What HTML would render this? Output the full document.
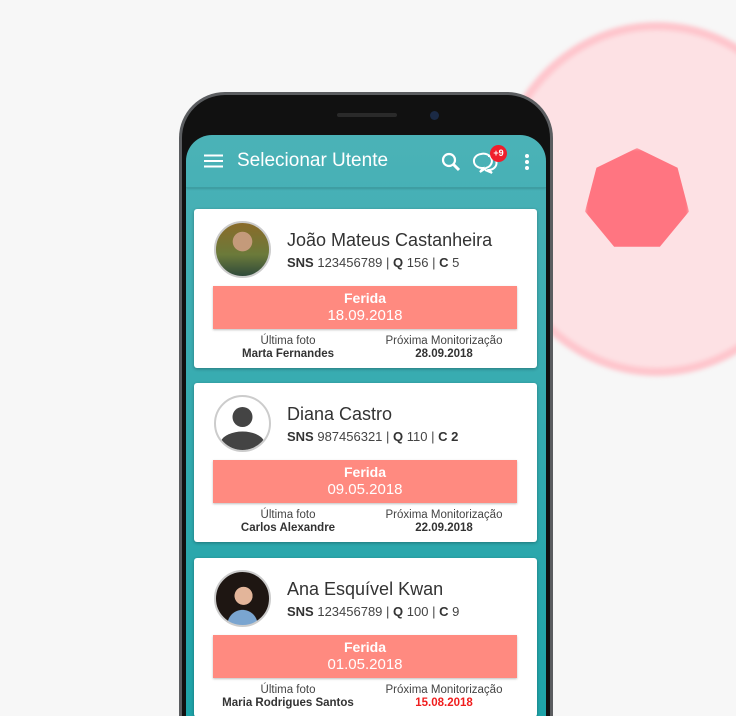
<!DOCTYPE html>
<html><head><meta charset="utf-8"><style>
*{margin:0;padding:0;box-sizing:border-box}
html,body{width:736px;height:716px;overflow:hidden}
body{background:#f7f7f7;font-family:"Liberation Sans",sans-serif;position:relative}
.logo{position:absolute;left:492px;top:22px;width:330px;height:354px;border-radius:50%;background:rgba(255,215,220,.7);border:8px solid rgba(255,175,185,.55);filter:blur(2px)}
.hep{position:absolute;left:585px;top:148px;width:104px;height:104px;background:#ff7581;clip-path:polygon(50% 0,89% 19%,100% 61%,72% 95%,28% 95%,0 61%,11% 19%);filter:blur(1.5px)}
.phone{position:absolute;left:179px;top:92px;width:374px;height:624px;border-radius:46px 46px 0 0;background:#111;border:3px solid #5b5d60;border-bottom:none}
.screen{position:absolute;left:186px;top:135px;width:360px;height:581px;border-radius:26px 26px 0 0;background:linear-gradient(#4bb2b7,#1ea3a8);overflow:hidden}
.bar{height:53px;border-bottom:1px solid #3e9ea2;box-shadow:0 1px 2px rgba(0,0,0,.15);position:relative;color:#fff}
.title{position:absolute;left:51px;top:15px;font-size:19px}
.card{position:absolute;left:8px;width:343px;height:159px;background:#fff;border-radius:3px;box-shadow:0 1px 3px rgba(0,0,0,.3)}
.av{position:absolute;left:20px;top:12px;width:57px;height:57px;border-radius:50%;border:2px solid #ccc;overflow:hidden;background:#fff}
.name{position:absolute;left:93px;top:21px;font-size:18px;color:#333}
.sns{position:absolute;left:93px;top:46px;font-size:13px;color:#444}
.sns b{color:#333}
.red{position:absolute;left:19px;top:77px;width:304px;height:43px;background:#ff8a80;color:#fff;text-align:center;font-size:14px;line-height:17px;padding-top:4px;box-shadow:0 1px 2px rgba(0,0,0,.25)}
.red span{font-size:15px}
.lab{position:absolute;top:126px;font-size:11.5px;color:#444;text-align:center;line-height:13px}
.lab b{color:#333}
</style></head><body>
<div class="logo"></div><div class="hep"></div>
<div class="phone"></div>
<div style="position:absolute;left:337px;top:113px;width:60px;height:4px;border-radius:2px;background:#2a2a2a"></div>
<div style="position:absolute;left:430px;top:111px;width:9px;height:9px;border-radius:50%;background:#1b2a45"></div>
<div class="screen">
 <div class="bar">
  <svg style="position:absolute;left:18px;top:19px" width="19" height="14"><path d="M0 1.5H19M0 7H19M0 12.5H19" stroke="#fff" stroke-width="2"/></svg>
  <div class="title">Selecionar Utente</div>
  <svg style="position:absolute;left:255px;top:17px" width="20" height="20"><circle cx="8" cy="8" r="6" stroke="#fff" stroke-width="2.2" fill="none"/><path d="M12.5 12.5L18 18" stroke="#fff" stroke-width="3"/></svg>
  <svg style="position:absolute;left:285px;top:15px" width="30" height="26"><path d="M10 4a8 7 0 1 0 2 14l-3 4 6-4a8 7 0 0 0-5-14z" stroke="#fff" stroke-width="2" fill="none"/><path d="M17 6a8 7 0 1 1 1 14l3 3-7-3" stroke="#fff" stroke-width="2" fill="none"/></svg>
  <div style="position:absolute;left:304px;top:10px;width:17px;height:17px;border-radius:50%;background:#f01e2c;color:#fff;font-size:9px;font-weight:bold;text-align:center;line-height:17px">+9</div>
  <svg style="position:absolute;left:338px;top:18px" width="6" height="18"><circle cx="3" cy="3" r="2" fill="#fff"/><circle cx="3" cy="9" r="2" fill="#fff"/><circle cx="3" cy="15" r="2" fill="#fff"/></svg>
 </div>
 <div class="card" style="top:74px">
  <div class="av" style="background:radial-gradient(circle at 50% 35%,#c49a7a 0 22%,transparent 23%),linear-gradient(#8a6b2a,#6b7a3a 60%,#2f4a3a)"></div>
  <div class="name">João Mateus Castanheira</div>
  <div class="sns"><b>SNS</b> 123456789 | <b>Q</b> 156 | <b>C</b> 5</div>
  <div class="red"><b>Ferida</b><br><span>18.09.2018</span></div>
  <div class="lab" style="left:38px;width:112px">Última foto<br><b>Marta Fernandes</b></div>
  <div class="lab" style="left:185px;width:130px">Próxima Monitorização<br><b>28.09.2018</b></div>
 </div>
 <div class="card" style="top:248px">
  <div class="av"><svg width="53" height="53"><circle cx="26.5" cy="20" r="10" fill="#444"/><path d="M5 44a22 12 0 0 1 43 0v9H5z" fill="#444"/></svg></div>
  <div class="name">Diana Castro</div>
  <div class="sns"><b>SNS</b> 987456321 | <b>Q</b> 110 | <b>C 2</b></div>
  <div class="red"><b>Ferida</b><br><span>09.05.2018</span></div>
  <div class="lab" style="left:38px;width:112px">Última foto<br><b>Carlos Alexandre</b></div>
  <div class="lab" style="left:185px;width:130px">Próxima Monitorização<br><b>22.09.2018</b></div>
 </div>
 <div class="card" style="top:423px">
  <div class="av" style="background:radial-gradient(circle at 52% 45%,#e3b59a 0 22%,transparent 23%),radial-gradient(circle at 50% 100%,#7aa5d0 0 25%,transparent 26%),#1e1612"></div>
  <div class="name">Ana Esquível Kwan</div>
  <div class="sns"><b>SNS</b> 123456789 | <b>Q</b> 100 | <b>C</b> 9</div>
  <div class="red"><b>Ferida</b><br><span>01.05.2018</span></div>
  <div class="lab" style="left:28px;width:132px">Última foto<br><b>Maria Rodrigues Santos</b></div>
  <div class="lab" style="left:185px;width:130px">Próxima Monitorização<br><b style="color:#f01e1e">15.08.2018</b></div>
 </div>
</div>
</body></html>
